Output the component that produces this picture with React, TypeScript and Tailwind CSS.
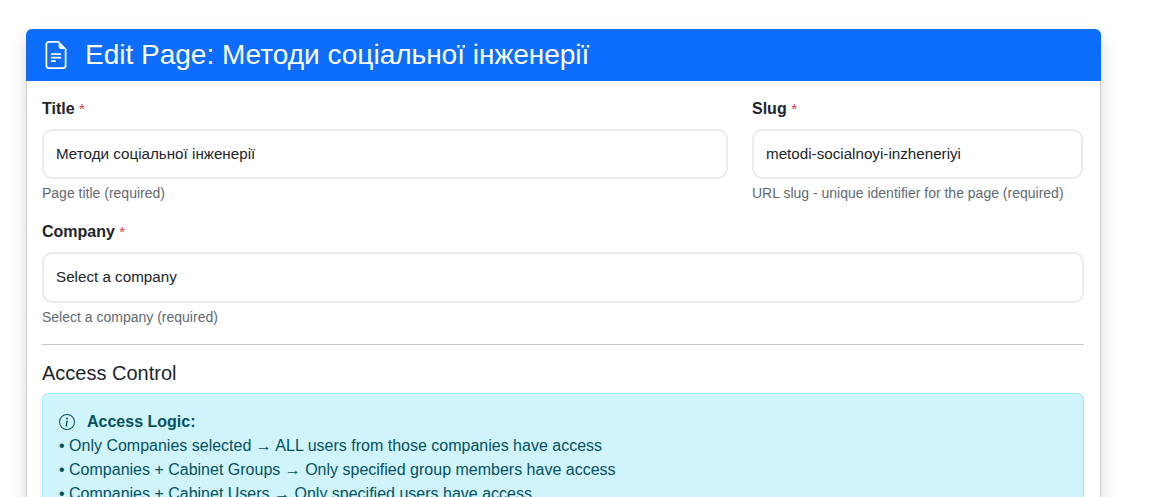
import React from 'react';

const FileTextIcon = () => (
  <svg xmlns="http://www.w3.org/2000/svg" width="28" height="28" viewBox="0 0 16 16" fill="currentColor">
    <path d="M5.5 7a.5.5 0 0 0 0 1h5a.5.5 0 0 0 0-1h-5zM5 9.5a.5.5 0 0 1 .5-.5h5a.5.5 0 0 1 0 1h-5a.5.5 0 0 1-.5-.5zm0 2a.5.5 0 0 1 .5-.5h2a.5.5 0 0 1 0 1h-2a.5.5 0 0 1-.5-.5z" />
    <path d="M9.5 0H4a2 2 0 0 0-2 2v12a2 2 0 0 0 2 2h8a2 2 0 0 0 2-2V4.5L9.5 0zm0 1v2A1.5 1.5 0 0 0 11 4.5h2V14a1 1 0 0 1-1 1H4a1 1 0 0 1-1-1V2a1 1 0 0 1 1-1h5.5z" />
  </svg>
);

const InfoIcon = () => (
  <svg xmlns="http://www.w3.org/2000/svg" width="16" height="16" viewBox="0 0 16 16" fill="currentColor">
    <path d="M8 15A7 7 0 1 1 8 1a7 7 0 0 1 0 14zm0 1A8 8 0 1 0 8 0a8 8 0 0 0 0 16z" />
    <path d="m8.93 6.588-2.29.287-.082.38.45.083c.294.07.352.176.288.469l-.738 3.468c-.194.897.105 1.319.808 1.319.545 0 1.178-.252 1.465-.598l.088-.416c-.2.176-.492.246-.686.246-.275 0-.375-.193-.304-.533L8.93 6.588zM9 4.5a1 1 0 1 1-2 0 1 1 0 0 1 2 0z" />
  </svg>
);

const Field = ({ label, value, help, tall }: { label: string; value: string; help: string; tall?: boolean }) => (
  <div>
    <label className="block text-[16px] leading-[24px] font-bold text-[#212529] mb-[8px]">
      {label} <span className="font-normal text-[15.2px] text-[#dc3545]">*</span>
    </label>
    <div className={`${tall ? 'h-[51px]' : 'h-[50px]'} flex items-center px-[12px] border-2 border-[#e9ecef] rounded-[10px] bg-white text-[15.2px] text-[#212529]`}>
      {value}
    </div>
    <div className="mt-[4px] text-[14px] leading-[21px] text-[#636a72]">{help}</div>
  </div>
);

const App: React.FC = () => {
  return (
    <div className="h-[497px] overflow-hidden bg-white font-['Liberation_Sans',Arial,sans-serif] pt-[29px] pl-[26px]">
      <div className="w-[1075px] rounded-[6px] border border-[#cfcfcf] bg-white shadow-[0_8px_16px_rgba(0,0,0,0.15)]">
        <div className="h-[52px] -mx-px -mt-px flex items-center bg-[#0d6efd] rounded-t-[6px] pl-[16px] text-white">
          <FileTextIcon />
          <h3 className="ml-[15px] text-[28px] leading-[34px]">Edit Page: Методи соціальної інженерії</h3>
        </div>
        <div className="pt-[16px] pl-[15px] pr-[16px]">
          <div className="grid grid-cols-[686px_331px] gap-x-[24px]">
            <Field label="Title" value="Методи соціальної інженерії" help="Page title (required)" />
            <Field label="Slug" value="metodi-socialnoyi-inzheneriyi" help="URL slug - unique identifier for the page (required)" />
          </div>
          <div className="mt-[16px]">
            <Field label="Company" value="Select a company" help="Select a company (required)" tall />
          </div>
          <hr className="mt-[16px] border-t border-[#c9cacb]" />
          <h5 className="mt-[16px] text-[20px] leading-[24px] text-[#212529]">Access Control</h5>
          <div className="mt-[8px] rounded-[6px] border border-[#9eeaf9] bg-[#cff4fc] px-[16px] py-[16px] text-[16px] leading-[24px] text-[#055160]">
            <div className="flex items-center">
              <InfoIcon />
              <strong className="ml-[12px] font-bold">Access Logic:</strong>
            </div>
            <div>• Only Companies selected → ALL users from those companies have access</div>
            <div>• Companies + Cabinet Groups → Only specified group members have access</div>
            <div>• Companies + Cabinet Users → Only specified users have access</div>
          </div>
        </div>
      </div>
    </div>
  );
};

export default App;
